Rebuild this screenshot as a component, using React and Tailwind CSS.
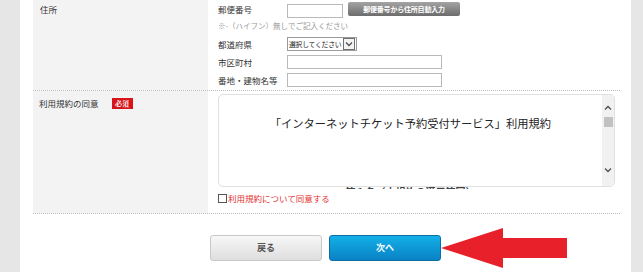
import React from 'react';

function Field({ label, children, className = '' }) {
  return (
    <div className={`flex items-start ${className}`}>
      <span className="w-[69px] mt-[1px] text-[8.5px] leading-[12px] whitespace-nowrap">{label}</span>
      {children}
    </div>
  );
}

function Chevron({ up }) {
  return (
    <svg width="8" height="5" viewBox="0 0 8 5" className="block">
      <path
        d={up ? 'M1 4.5 L4 1.5 L7 4.5' : 'M1 0.5 L4 3.5 L7 0.5'}
        fill="none"
        stroke="#505050"
        strokeWidth="1.3"
      />
    </svg>
  );
}

export default function App() {
  return (
    <div className="flex w-[643px] h-[272px] overflow-hidden bg-[#e6e6e6] text-[#333] font-['Noto_Sans_CJK_JP',sans-serif]">
      <div className="ml-[20px] w-[611px] h-full bg-white pl-[13px] pr-[11px]">
        {/* 住所 */}
        <div className="grid grid-cols-[175px_1fr] h-[91px] border-b border-dotted border-[#bbb]">
          <div className="bg-[#f3f3f3] pl-[7px] pt-[3px] text-[8.5px] leading-[12px]">住所</div>
          <div className="pl-[10px] pt-[2px]">
            <Field label="郵便番号">
              <div className="mt-[2px] w-[56px] h-[14px] border border-[#b9b9b9] bg-white" />
              <button className="ml-[5px] w-[112px] h-[14px] rounded-[2px] bg-linear-to-b from-[#a4a4a4] to-[#6c6c6c] text-white font-bold text-[7px] leading-[14px] tracking-[-0.2px]">
                郵便番号から住所自動入力
              </button>
            </Field>
            <div className="mt-[3px] text-[7.5px] leading-[10px] text-[#999] whitespace-nowrap">
              ※-（ハイフン）無しでご記入ください
            </div>
            <Field label="都道府県" className="mt-[6px]">
              <div className="flex items-center w-[70px] h-[14px] border border-[#9a9a9a] bg-white">
                <span className="flex-1 pl-[1px] text-[6.8px] leading-[12px] tracking-[-0.2px] text-[#222] whitespace-nowrap">
                  選択してください
                </span>
                <span className="flex items-center justify-center w-[12px] h-[12px] mr-px border border-[#707070] bg-[#f4f4f4]">
                  <Chevron />
                </span>
              </div>
            </Field>
            <Field label="市区町村" className="mt-[4px]">
              <div className="w-[155px] h-[14px] border border-[#b9b9b9] bg-white" />
            </Field>
            <Field label="番地・建物名等" className="mt-[4px]">
              <div className="w-[155px] h-[14px] border border-[#b9b9b9] bg-white" />
            </Field>
          </div>
        </div>

        {/* 利用規約の同意 */}
        <div className="grid grid-cols-[175px_1fr] h-[123px] border-b border-dotted border-[#bbb]">
          <div className="bg-[#f3f3f3] pl-[6px] pt-[6px] flex items-start">
            <span className="text-[8.5px] leading-[12px] whitespace-nowrap">利用規約の同意</span>
            <span className="ml-[13px] mt-[1px] w-[21px] h-[11px] bg-[#d7141c] text-white font-bold text-[7px] leading-[11px] text-center font-['Noto_Serif_CJK_JP','Noto_Sans_CJK_JP',serif]">
              必須
            </span>
          </div>
          <div className="pl-[10px] pt-[3px]">
            <div className="flex w-[397px] h-[93px] border border-[#e0e0e0] rounded-[5px] overflow-hidden bg-white">
              <div className="flex-1 pt-[22px] text-center text-[11.25px] leading-[12px] text-[#222] whitespace-nowrap">
                「インターネットチケット予約受付サービス」利用規約
              </div>
              <div className="w-[12px] bg-[#f1f1f1] flex flex-col items-center pt-[10px] pb-[13px]">
                <Chevron up />
                <div className="mt-[7px] w-[9px] h-[10px] bg-[#c1c1c1]" />
                <div className="flex-1" />
                <Chevron />
              </div>
            </div>
            <div className="w-[385px] h-[2px] overflow-hidden text-center">
              <div className="text-[10px] leading-[11px] font-bold text-[#444] mt-[-1px]">第１条（本規約の適用範囲）</div>
            </div>
            <label className="mt-[4px] flex items-center">
              <span className="w-[9px] h-[9px] border border-[#555] bg-white" />
              <span className="ml-[1px] text-[8.5px] leading-[11px] text-[#e53030] whitespace-nowrap">
                利用規約について同意する
              </span>
            </label>
          </div>
        </div>

        {/* Buttons */}
        <div className="mt-[20px] pl-[177px] flex items-center">
          <button className="w-[112px] h-[26px] rounded-[3px] border border-[#c9c9c9] bg-linear-to-b from-[#f7f7f7] to-[#dedede] text-[#555] font-bold text-[9px]">
            戻る
          </button>
          <button className="ml-[7px] w-[112px] h-[26px] rounded-[3px] border border-[#0b6ea6] bg-linear-to-b from-[#14b0e8] to-[#0a82c4] text-white font-bold text-[9px]">
            次へ
          </button>
          <svg width="127" height="41" viewBox="0 0 127 41" className="-mt-[6px] -mb-[8px]">
            <polygon points="0,20 62,0 62,10 126,10 126,30 62,30 62,40" fill="#e8202a" />
          </svg>
        </div>
      </div>
    </div>
  );
}
